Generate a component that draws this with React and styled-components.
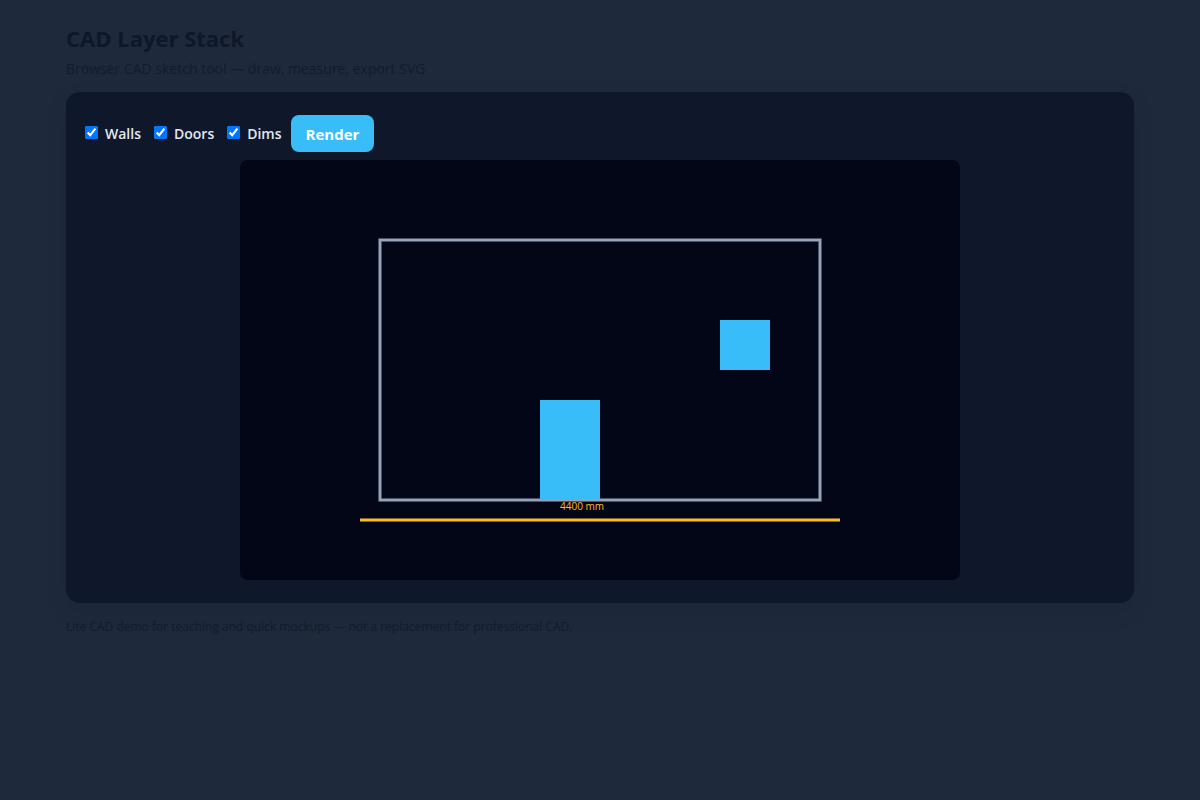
import { useState } from 'react'
import styled, { createGlobalStyle } from 'styled-components'

const GlobalStyle = createGlobalStyle`
    * {
        box-sizing: border-box;
    }

    body {
        margin: 0;
        min-height: 100vh;
        background: #1e293b;
        color: #0f172a;
        font-family: 'Open Sans', 'Noto Sans', sans-serif;
    }
`

const Page = styled.main`
    max-width: 1100px;
    margin: 0 auto;
    padding: 24px 16px;
`

const Title = styled.h1`
    margin: 0;
    font-size: 22px;
    line-height: 28px;
    font-weight: 700;
`

const Subtitle = styled.p`
    margin: 6px 0 12px;
    font-size: 14px;
    line-height: 22px;
    opacity: 0.7;
`

const Card = styled.section`
    padding: 23px 18px;
    border-radius: 14px;
    background: #0f172a;
    box-shadow: 0 8px 24px rgba(15, 23, 42, 0.08);
`

const Toolbar = styled.div`
    display: flex;
    flex-wrap: wrap;
    align-items: center;
    margin-bottom: 8px;
`

const LayerLabel = styled.label`
    display: flex;
    align-items: center;
    gap: 7px;
    margin-right: 12px;
    color: #e2e8f0;
    font-size: 14px;
    line-height: 20px;
    font-weight: 600;

    &:last-of-type {
        margin-right: 9px;
    }
`

const Checkbox = styled.input`
    width: 13px;
    height: 13px;
    margin: 0 0 3px 1px;
`

const Button = styled.button`
    height: 37px;
    padding: 0 15px;
    border: 0;
    border-radius: 8px;
    background: #38bdf8;
    color: #fff;
    font-family: inherit;
    font-size: 15px;
    font-weight: 700;
    cursor: pointer;
`

const Drawing = styled.svg`
    display: block;
    width: 100%;
    max-width: 720px;
    margin: 0 auto;
    border-radius: 8px;
    background: #020617;
`

const Footnote = styled.p`
    margin: 14px 0 0;
    font-size: 12px;
    line-height: 20px;
    opacity: 0.7;
`

const layers = [
    { id: 'walls', label: 'Walls' },
    { id: 'doors', label: 'Doors' },
    { id: 'dims', label: 'Dims' },
]

const allOn = { walls: true, doors: true, dims: true }

const App = () => {
    const [checked, setChecked] = useState(allOn)
    const [visible, setVisible] = useState(allOn)

    const toggle = (id) => setChecked({ ...checked, [id]: !checked[id] })

    return (
        <>
            <GlobalStyle />
            <Page>
                <Title>CAD Layer Stack</Title>
                <Subtitle>Browser CAD sketch tool — draw, measure, export SVG</Subtitle>
                <Card>
                    <Toolbar>
                        {layers.map(({ id, label }) => (
                            <LayerLabel key={id} htmlFor={id}>
                                <Checkbox
                                    id={id}
                                    type="checkbox"
                                    checked={checked[id]}
                                    onChange={() => toggle(id)}
                                />
                                {label}
                            </LayerLabel>
                        ))}
                        <Button type="button" onClick={() => setVisible(checked)}>Render</Button>
                    </Toolbar>
                    <Drawing viewBox="0 0 720 420">
                        {visible.walls && (
                            <rect x="140" y="80" width="440" height="260" fill="none" stroke="#94a3b8" strokeWidth="3" />
                        )}
                        {visible.doors && (
                            <g fill="#38bdf8">
                                <rect x="300" y="240" width="60" height="100" />
                                <rect x="480" y="160" width="50" height="50" />
                            </g>
                        )}
                        {visible.dims && (
                            <g>
                                <line x1="120" y1="360" x2="600" y2="360" stroke="#fbbf24" strokeWidth="3" />
                                <text x="320" y="350" fill="#fbbf24" fontSize="10">4400 mm</text>
                            </g>
                        )}
                    </Drawing>
                </Card>
                <Footnote>Lite CAD demo for teaching and quick mockups — not a replacement for professional CAD.</Footnote>
            </Page>
        </>
    )
}

export default App
